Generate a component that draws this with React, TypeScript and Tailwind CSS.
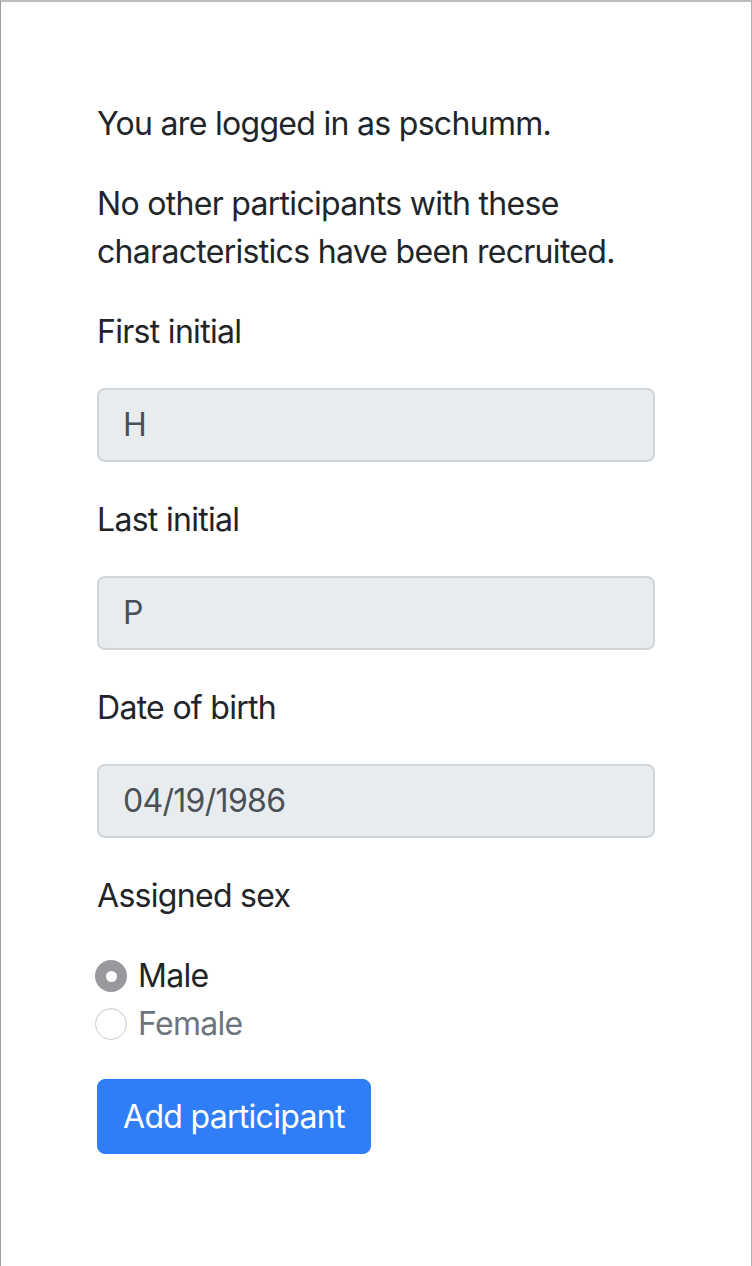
export default function App() {
  return (
    <div className="min-h-[1266px] w-[752px] border-t-2 border-l border-r border-t-[#bdbdbd] border-l-[#9e9e9e] border-r-[#b0b0b0] bg-white font-['Inter','Liberation_Sans',sans-serif] text-[32px] leading-[48px] tracking-[-0.7px] text-[#212529]">
      <div className="px-[96px] pt-[98px]">
        <p className="mb-[32px]">You are logged in as pschumm.</p>
        <p className="mb-[32px]">No other participants with these characteristics have been recruited.</p>

        <Field label="First initial" value="H" />
        <Field label="Last initial" value="P" />
        <Field label="Date of birth" value="04/19/1986" />

        <div className="mb-[32px]">Assigned sex</div>
        <div className="flex flex-col">
          <label className="-ml-[2px] flex items-center gap-[11px]">
            <span className="flex h-[32px] w-[32px] items-center justify-center rounded-full bg-[#98989d]">
              <span className="h-[11px] w-[11px] rounded-full bg-white" />
            </span>
            <span>Male</span>
          </label>
          <label className="-ml-[2px] flex items-center gap-[11px] text-[#6c757d]">
            <span className="h-[32px] w-[32px] rounded-full border border-[#cfcfcf] bg-white shadow-[inset_0_1px_1px_rgba(0,0,0,0.06)]" />
            <span>Female</span>
          </label>
        </div>

        <button className="mt-[31px] rounded-[8px] border border-[#2f7ef7] bg-[#2f7ef7] px-[25px] py-[12px] text-[32px] leading-[49px] tracking-[-0.7px] text-white">
          Add participant
        </button>
      </div>
    </div>
  );
}

function Field({ label, value }: { label: string; value: string }) {
  return (
    <div className="mb-[34px]">
      <div className="mb-[32px]">{label}</div>
      <div className="h-[74px] w-[558px] rounded-[8px] border-2 border-[#d1d6db] bg-[#e9ecef] px-[24px] leading-[70px] text-[#495057]">
        {value}
      </div>
    </div>
  );
}
